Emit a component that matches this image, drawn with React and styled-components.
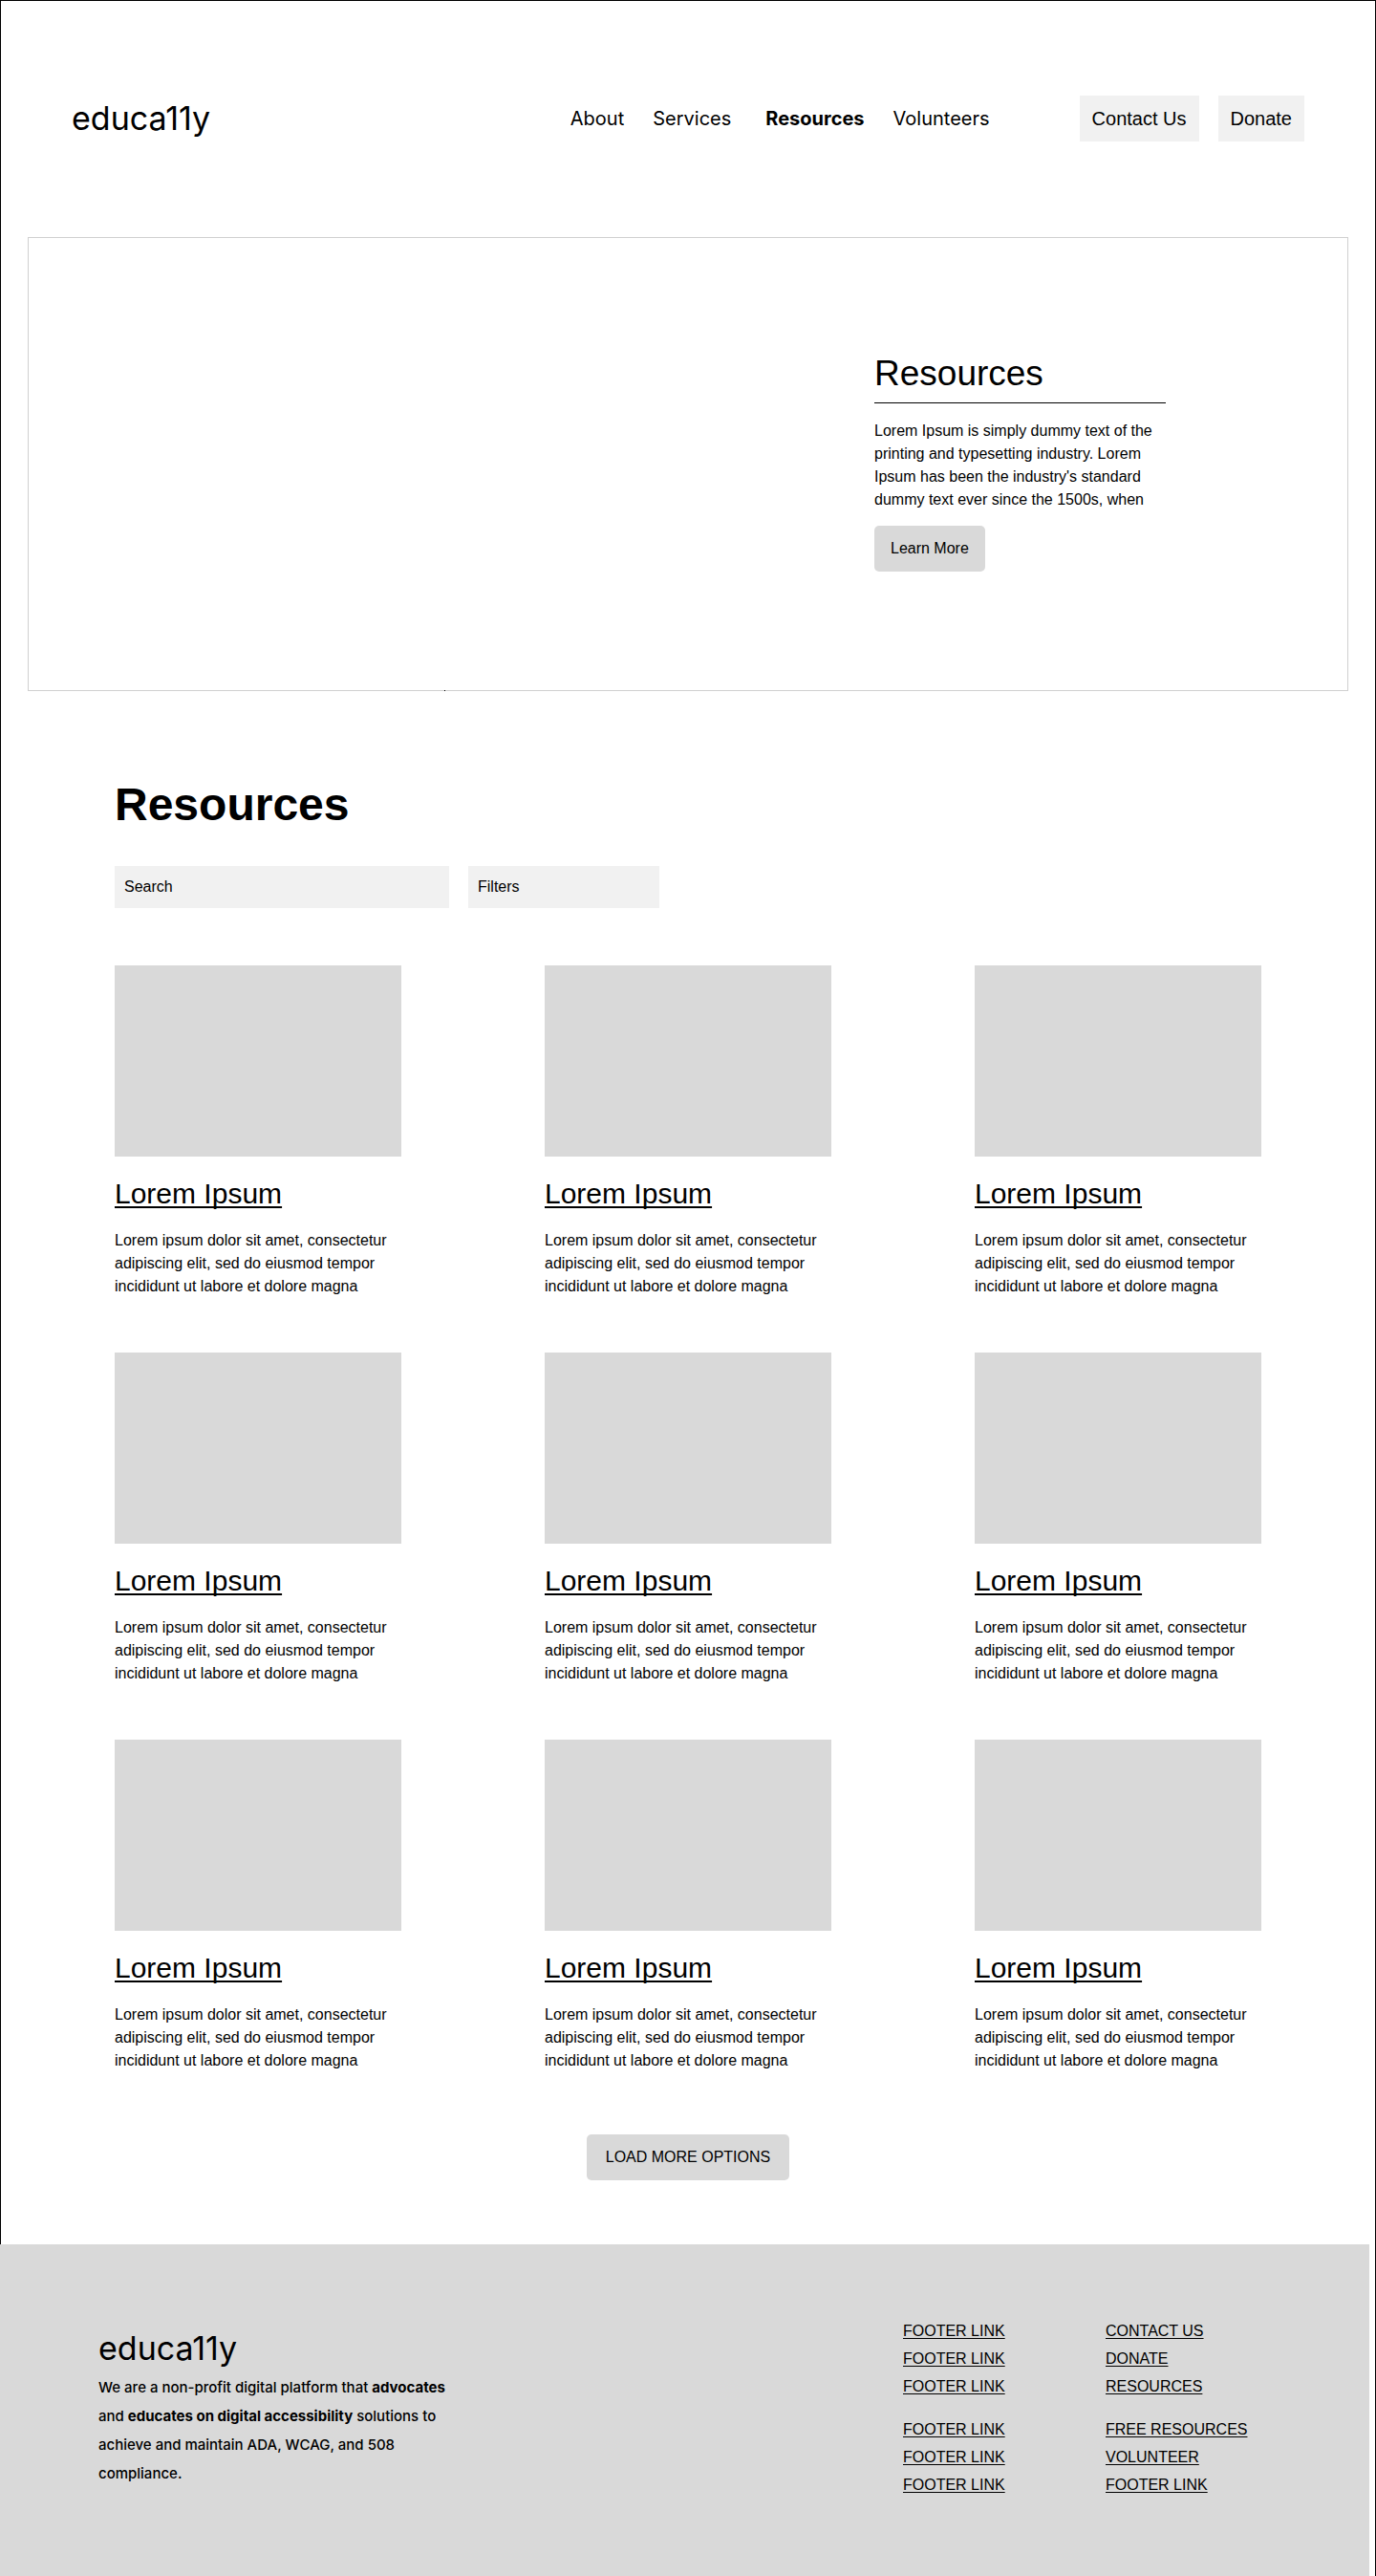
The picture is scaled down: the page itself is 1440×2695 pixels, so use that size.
import React from "react";
import styled, { createGlobalStyle, css } from "styled-components";

const sans = '"Helvetica Neue", "Liberation Sans", Arial, sans-serif';
const inter = 'Inter, "Liberation Sans", sans-serif';

const GlobalStyle = createGlobalStyle`
  *, *::before, *::after { box-sizing: border-box; }
  body { margin: 0; background: #fff; color: #000; font-family: ${sans}; font-size: 16px; line-height: 24px; }
  h1, h2, h3, p, ul { margin: 0; padding: 0; }
  ul { list-style: none; }
  a { color: inherit; }
  button, input, select { font: inherit; color: inherit; border: 0; border-radius: 0; }
`;

const Page = styled.div`
  border: 1px solid #000;
`;

const Header = styled.header`
  display: flex;
  align-items: center;
  padding: 99px 74px 100px;
`;

const Logo = styled.a`
  display: block;
  font-family: ${inter};
  font-size: 34px;
  line-height: 44px;
  text-decoration: none;
`;

const Nav = styled.nav`
  display: flex;
  gap: 30px;
  margin-left: auto;
`;

const NavLink = styled.a`
  font-family: ${inter};
  font-size: 20px;
  line-height: 24px;
  text-decoration: none;
  ${(p) => p.$current && css`
    font-weight: 700;
    padding-left: 6px;
  `}
`;

const Actions = styled.div`
  display: flex;
  gap: 20px;
  margin-left: 94px;
`;

const ActionButton = styled.button`
  height: 48px;
  padding: 0 13px;
  background: #f1f1f1;
  font-size: 20px;
  cursor: pointer;
`;

const Hero = styled.section`
  position: relative;
  display: flex;
  justify-content: flex-end;
  margin: 0 28px;
  padding: 120px 190px 124px;
  border: 1px solid #d0d0d0;

  &::after {
    content: "";
    position: absolute;
    left: 435px;
    bottom: -1px;
    width: 1px;
    height: 1px;
    background: #000;
  }
`;

const HeroBody = styled.div`
  width: 305px;
`;

const HeroTitle = styled.h2`
  padding-bottom: 8px;
  border-bottom: 1px solid #000;
  font-size: 37px;
  font-weight: 400;
  line-height: 44px;
`;

const HeroText = styled.p`
  margin: 17px 0 15px;
`;

const Button = styled.button`
  display: block;
  height: 48px;
  padding: 0 ${(p) => (p.$wide ? 20 : 17)}px;
  border-radius: 5px;
  background: #d9d9d9;
  cursor: pointer;
`;

const Main = styled.main`
  padding: 91px 119px 67px;
`;

const Title = styled.h1`
  font-size: 48px;
  font-weight: 700;
  line-height: 56px;
`;

const Controls = styled.form`
  display: flex;
  gap: 20px;
  margin: 36px 0 60px;
`;

const field = css`
  height: 44px;
  padding: 0 10px;
  background: #f1f1f1;
  appearance: none;
`;

const Search = styled.input`
  ${field}
  width: 350px;

  &::placeholder { color: #000; opacity: 1; }
`;

const Filters = styled.select`
  ${field}
  width: 200px;
`;

const Grid = styled.ul`
  display: grid;
  grid-template-columns: repeat(3, 300px);
  justify-content: space-between;
  row-gap: 57px;
  margin-bottom: 65px;
`;

const Thumb = styled.div`
  height: 200px;
  background: #d9d9d9;
`;

const CardTitle = styled.h3`
  margin: 21px 0 19px;
  font-size: 30px;
  font-weight: 400;
  line-height: 36px;

  a {
    text-decoration-thickness: 2px;
    text-underline-offset: 3px;
    text-decoration-skip-ink: none;
  }
`;

const More = styled.div`
  display: flex;
  justify-content: center;
`;

const Footer = styled.footer`
  display: flex;
  justify-content: space-between;
  margin: 0 6px -1px -1px;
  padding: 76px 126px 83px 103px;
  background: #d9d9d9;
`;

const About = styled.div`
  width: 370px;
  padding-top: 11px;
`;

const Mission = styled.p`
  margin-top: 4px;
  font-family: ${inter};
  font-size: 15px;
  font-weight: 500;
  line-height: 30px;

  b { font-weight: 700; }
`;

const FooterNav = styled.nav`
  display: grid;
  grid-template-columns: 212px 150px;
  row-gap: 16px;
  align-content: start;
`;

const FooterLinks = styled.ul`
  line-height: 29px;

  a {
    text-decoration-skip-ink: none;
    text-underline-offset: 2px;
  }
`;

const pages = ["About", "Services", "Resources", "Volunteers"];
const cards = Array.from({ length: 9 }, (_, i) => i);
const plain = ["FOOTER LINK", "FOOTER LINK", "FOOTER LINK"];
const footerGroups = [
  plain,
  ["CONTACT US", "DONATE", "RESOURCES"],
  plain,
  ["FREE RESOURCES", "VOLUNTEER", "FOOTER LINK"],
];

export default function App() {
  return (
    <>
      <GlobalStyle />
      <Page>
        <Header>
          <Logo href="#">educa11y</Logo>
          <Nav aria-label="Main">
            {pages.map((name) => (
              <NavLink
                key={name}
                href="#"
                $current={name === "Resources"}
                aria-current={name === "Resources" ? "page" : undefined}
              >
                {name}
              </NavLink>
            ))}
          </Nav>
          <Actions>
            <ActionButton type="button">Contact Us</ActionButton>
            <ActionButton type="button">Donate</ActionButton>
          </Actions>
        </Header>

        <Hero>
          <HeroBody>
            <HeroTitle>Resources</HeroTitle>
            <HeroText>
              Lorem Ipsum is simply dummy text of the printing and typesetting
              industry. Lorem Ipsum has been the industry's standard dummy text
              ever since the 1500s, when
            </HeroText>
            <Button type="button">Learn More</Button>
          </HeroBody>
        </Hero>

        <Main>
          <Title>Resources</Title>
          <Controls>
            <Search type="search" placeholder="Search" aria-label="Search" />
            <Filters aria-label="Filters">
              <option>Filters</option>
            </Filters>
          </Controls>
          <Grid>
            {cards.map((i) => (
              <li key={i}>
                <Thumb />
                <CardTitle>
                  <a href="#">Lorem Ipsum</a>
                </CardTitle>
                <p>
                  Lorem ipsum dolor sit amet, consectetur adipiscing elit, sed
                  do eiusmod tempor incididunt ut labore et dolore magna
                </p>
              </li>
            ))}
          </Grid>
          <More>
            <Button type="button" $wide>LOAD MORE OPTIONS</Button>
          </More>
        </Main>

        <Footer>
          <About>
            <Logo href="#">educa11y</Logo>
            <Mission>
              We are a non-profit digital platform that <b>advocates</b> and{" "}
              <b>educates on digital accessibility</b> solutions to achieve and
              maintain ADA, WCAG, and 508 compliance.
            </Mission>
          </About>
          <FooterNav aria-label="Footer">
            {footerGroups.map((links, g) => (
              <FooterLinks key={g}>
                {links.map((text, i) => (
                  <li key={i}>
                    <a href="#">{text}</a>
                  </li>
                ))}
              </FooterLinks>
            ))}
          </FooterNav>
        </Footer>
      </Page>
    </>
  );
}
